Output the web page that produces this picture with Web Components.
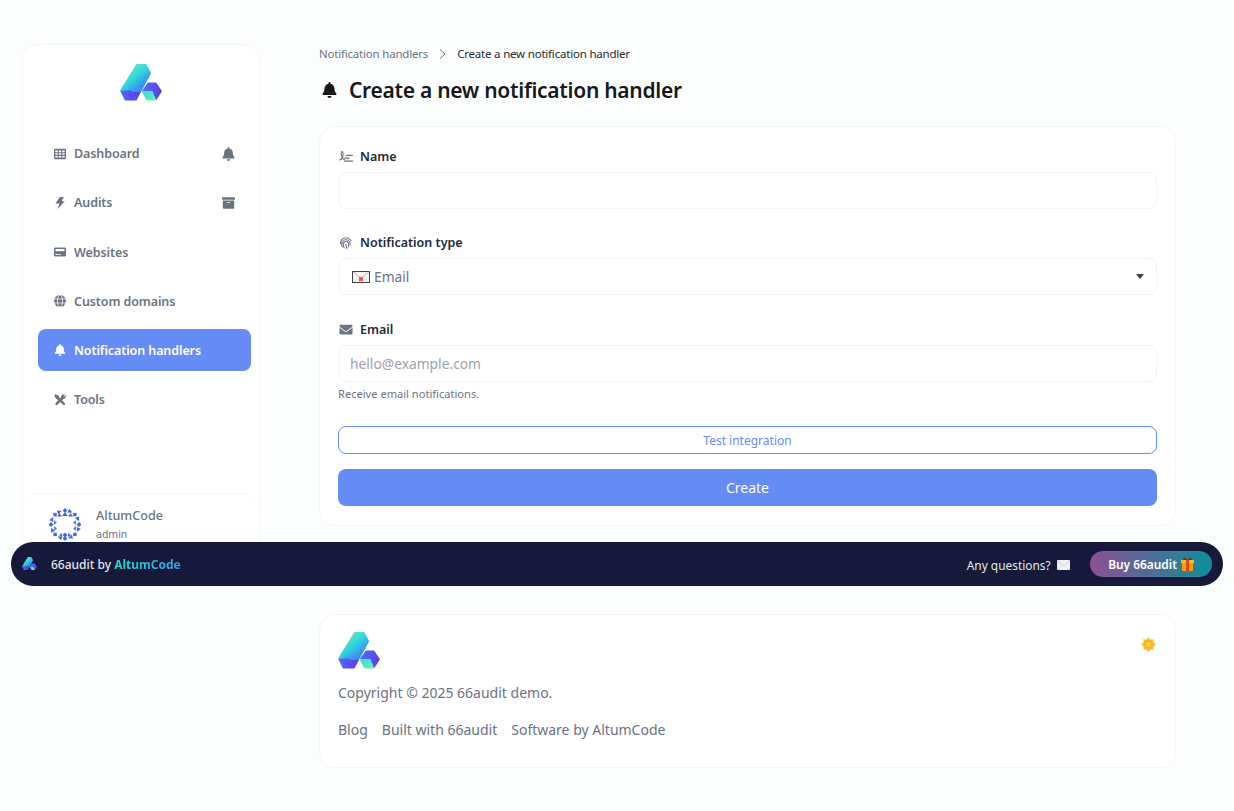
<!DOCTYPE html>
<html lang="en">
<head>
<meta charset="utf-8">
<title>Create a new notification handler</title>
<style>
    html, body {
        margin: 0;
        background: #fcfefe;
        font-family: "Noto Sans", "Open Sans", sans-serif;
    }
    body {
        height: 811px;
        overflow: hidden;
    }
</style>
</head>
<body>
<app-shell>
    <side-bar slot="side">
        <nav-item label="Dashboard" icon="grid" trail="bell"></nav-item>
        <nav-item label="Audits" icon="bolt" trail="archive"></nav-item>
        <nav-item label="Websites" icon="pager"></nav-item>
        <nav-item label="Custom domains" icon="globe"></nav-item>
        <nav-item label="Notification handlers" icon="bell" active></nav-item>
        <nav-item label="Tools" icon="tools"></nav-item>
    </side-bar>
    <bread-crumb parent="Notification handlers" current="Create a new notification handler"></bread-crumb>
    <page-title icon="bell">Create a new notification handler</page-title>
    <handler-form></handler-form>
    <page-footer></page-footer>
</app-shell>
<promo-bar></promo-bar>

<script>
const ICONS = {
    bell: '<svg viewBox="0 0 448 512"><path fill="currentColor" d="M224 512c35.32 0 63.97-28.65 63.97-64H160.03c0 35.35 28.65 64 63.97 64zm215.39-149.71c-19.32-20.76-55.47-51.99-55.47-154.29 0-77.7-54.48-139.9-127.94-155.16V32c0-17.67-14.32-32-31.98-32s-31.98 14.33-31.98 32v20.84C118.56 68.1 64.08 130.3 64.08 208c0 102.3-36.15 133.53-55.47 154.29-6 6.45-8.66 14.16-8.61 21.71.11 16.4 12.98 32 32.1 32h383.8c19.12 0 32-15.6 32.1-32 .05-7.55-2.61-15.27-8.61-21.71z"/></svg>',
    grid: '<svg viewBox="0 0 512 512"><path fill="currentColor" fill-rule="evenodd" d="M48 32h416a48 48 0 0 1 48 48v352a48 48 0 0 1-48 48H48a48 48 0 0 1-48-48V80a48 48 0 0 1 48-48zM56 104v72h104v-72zm148 0v72h104v-72zm148 0v72h104v-72zM56 220v72h104v-72zm148 0v72h104v-72zm148 0v72h104v-72zM56 336v72h104v-72zm148 0v72h104v-72zm148 0v72h104v-72z"/></svg>',
    bolt: '<svg viewBox="0 0 512 512"><path fill="currentColor" d="M250 0h170L330 180h130L160 512l70-240H60z"/></svg>',
    archive: '<svg viewBox="0 0 512 512"><path fill="currentColor" d="M32 448c0 17.7 14.3 32 32 32h384c17.7 0 32-14.3 32-32V160H32v288zm160-212c0-6.6 5.4-12 12-12h104c6.6 0 12 5.4 12 12v8c0 6.6-5.4 12-12 12H204c-6.6 0-12-5.4-12-12v-8zM480 32H32C14.3 32 0 46.3 0 64v48c0 8.8 7.2 16 16 16h480c8.8 0 16-7.2 16-16V64c0-17.7-14.3-32-32-32z"/></svg>',
    pager: '<svg viewBox="0 0 512 512"><path fill="currentColor" fill-rule="evenodd" d="M48 64h416a48 48 0 0 1 48 48v288a48 48 0 0 1-48 48H48a48 48 0 0 1-48-48V112a48 48 0 0 1 48-48zM64 128v96h384v-96zm0 208v48h96v-48zm128 0v48h96v-48z"/></svg>',
    globe: '<svg viewBox="0 0 24 24"><circle cx="12" cy="12" r="12" fill="currentColor"/><g fill="none" stroke="#fff" stroke-width="1.5"><ellipse cx="12" cy="12" rx="5" ry="12"/><path d="M0 8h24M0 16h24"/></g></svg>',
    tools: '<svg viewBox="0 0 512 512"><g fill="none" stroke="currentColor"><path stroke-width="110" stroke-linecap="round" d="M110 420 390 140"/><path stroke-width="100" stroke-linecap="round" d="M130 130 420 420"/></g><path fill="currentColor" d="M10 60 60 10 210 90 230 170 170 230 90 210z"/><path fill="currentColor" d="M300 140C290 60 370-10 470 15l-75 75 30 30 75-75c25 100-45 180-125 170z"/></svg>',
    signature: '<svg viewBox="0 0 24 20"><path fill="none" stroke="currentColor" stroke-width="1.900" stroke-linecap="round" stroke-linejoin="round" d="M1 16c3-1 6-5 6-9.500C7 3 6 1.500 5 1.500 3.500 1.500 3.500 5 4.500 9c.8 3.200 2 6 4 6 2.500 0 2.500-3.500 4-3.500s1 2.500 2.500 2.500c1 0 1.500-1 2-1.500M13 8h10M9 18h15"/></svg>',
    fingerprint: '<svg viewBox="0 0 24 24"><g fill="none" stroke="currentColor" stroke-width="2" stroke-linecap="round"><path d="M3 8a11 11 0 0 1 18 0"/><path d="M2 14c0-2 .2-3 1-4M5 20c-.8-2-1-3-1-5a8 8 0 0 1 16 0v1"/><path d="M8.500 22c-.8-2-1.500-4-1.500-7a5 5 0 0 1 10 0c0 2 0 3-.2 5"/><path d="M12 15c0 3 .5 5 1.500 8"/></g></svg>',
    envelope: '<svg viewBox="0 0 512 512"><path fill="currentColor" d="M502.3 190.8c3.9-3.1 9.7-.2 9.7 4.7V400c0 26.5-21.5 48-48 48H48c-26.5 0-48-21.5-48-48V195.6c0-5 5.7-7.8 9.7-4.7 22.4 17.4 52.1 39.5 154.1 113.6 21.1 15.4 56.7 47.8 92.2 47.6 35.7.3 72-32.8 92.3-47.6 102-74.1 131.6-96.3 154-113.7zM256 320c23.2.4 56.6-29.2 73.4-41.4 132.7-96.3 142.8-104.7 173.4-128.7 5.8-4.5 9.2-11.5 9.2-18.900v-19c0-26.500-21.500-48-48-48H48C21.500 64 0 85.500 0 112v19c0 7.400 3.400 14.300 9.200 18.900 30.600 23.900 40.700 32.400 173.400 128.700 16.800 12.200 50.200 41.800 73.400 41.400z"/></svg>',
    sun: '<svg viewBox="0 0 24 24"><g fill="#fbbf24"><circle cx="12" cy="12" r="9"/><path d="M12 0l3 4h-6zM12 24l-3-4h6zM0 12l4-3v6zM24 12l-4 3V9zM3.500 3.500l5 1-4 4zM20.500 20.500l-5-1 4-4zM20.500 3.500l-1 5-4-4zM3.500 20.500l1-5 4 4z"/></g><circle cx="12" cy="12" r="5.500" fill="#fcd34d" stroke="#f59e0b" stroke-width="1.500"/></svg>'
};

function defineElement(name, html) {
    customElements.define(name, class extends HTMLElement {
        constructor() {
            super();
            this.attachShadow({ mode: 'open' });
        }
        connectedCallback() {
            const attrs = {};
            for (const a of this.attributes) attrs[a.name] = a.value;
            this.shadowRoot.innerHTML = typeof html === 'function' ? html(attrs) : html;
        }
    });
}

let logoCount = 0;
class BrandLogo extends HTMLElement {
    constructor() {
        super();
        this.attachShadow({ mode: 'open' });
    }
    connectedCallback() {
        const w = this.getAttribute('width') || 42;
        const n = logoCount++;
        this.shadowRoot.innerHTML = `
        <style>
            :host { display: block; line-height: 0; }
            svg { display: block; }
        </style>
        <svg width="${w}" viewBox="0 0 42.700 38" style="aspect-ratio: 42.7 / 38">
            <defs>
                <linearGradient id="a${n}" x1="0.250" y1="0.050" x2="0.850" y2="0.700">
                    <stop offset="0" stop-color="#66efbf"/>
                    <stop offset="0.550" stop-color="#2fd5dc"/>
                    <stop offset="1" stop-color="#3a8cf6"/>
                </linearGradient>
                <linearGradient id="b${n}" x1="0" y1="0" x2="1" y2="0">
                    <stop offset="0" stop-color="#4a74f2"/>
                    <stop offset="1" stop-color="#5c3ce8"/>
                </linearGradient>
                <linearGradient id="c${n}" x1="0" y1="0" x2="1" y2="1">
                    <stop offset="0" stop-color="#2fd8d0"/>
                    <stop offset="1" stop-color="#6cf0bc"/>
                </linearGradient>
            </defs>
            <path fill="url(#a${n})" d="M0 27 16.700 0h10l5 9.300-10 18.400H11z"/>
            <path fill="url(#b${n})" d="M0 27h11l5.700 10H5z"/>
            <path fill="#5a45e8" d="M11 27.700h10.700L16.700 37z"/>
            <path fill="url(#b${n})" d="M22 27.700 28.300 18.700h8.400l6 9-6 9.300-4-9.300z"/>
            <path fill="url(#c${n})" d="M22 27.700h10.700l4 9.300H27z"/>
        </svg>`;
    }
}
customElements.define('brand-logo', BrandLogo);

// avatar ring of little blue triangles and diamonds
class UserAvatar extends HTMLElement {
    constructor() {
        super();
        this.attachShadow({ mode: 'open' });
    }
    connectedCallback() {
        let marks = '';
        for (let i = 0; i < 16; i++) {
            const deg = i * 22.5;
            const shape = i % 2 ? 'M-2.200 -2.200 2.200 0 -2.200 2.200z' : 'M0 -2.400 2.400 0 0 2.400 -2.400 0z';
            marks += `<path d="${shape}" transform="translate(16 16.500) rotate(${deg}) translate(0 -14)"/>`;
        }
        this.shadowRoot.innerHTML = `
        <style>
            :host { display: block; flex: none; }
            svg { display: block; }
        </style>
        <svg width="32" height="33" viewBox="0 0 32 33">
            <g fill="#4268dc">${marks}</g>
            <path fill="#4268dc" d="M16 4l3 4h-6zM10.500 5l2.500 3.500H8zM21.500 5l2.500 3.500h-5z"/>
            <path fill="#5c80e8" d="M5 12l3 2.500-3 2.500zM27 12l-3 2.500 3 2.500zM5 18l3 2.500-3 2.500zM27 18l-3 2.500 3 2.500z"/>
            <path fill="#4268dc" d="M10 27l3-2v4zM22 27l-3-2v4zM16 24.500l2.500 2.500-2.500 2.500-2.500-2.500z"/>
        </svg>`;
    }
}
customElements.define('user-avatar', UserAvatar);

defineElement('app-shell', `
    <style>
        :host {
            display: flex;
            gap: 59px;
            padding: 44px 0 0 22px;
            box-sizing: border-box;
        }
        main {
            width: 857px;
            display: flex;
            flex-direction: column;
        }
    </style>
    <slot name="side"></slot>
    <main><slot></slot></main>
`);

defineElement('side-bar', `
    <style>
        :host {
            display: flex;
            flex-direction: column;
            box-sizing: border-box;
            flex: none;
            width: 238px;
            height: 516px;
            background: #fff;
            border: 1px solid #f3f6f7;
            border-radius: 16px;
        }
        .logo {
            display: flex;
            justify-content: center;
            padding: 19px 0 31.300px;
        }
        nav {
            flex: 1;
            display: flex;
            flex-direction: column;
            gap: 7.2px;
            padding: 0 8px 0 15px;
        }
        .user {
            display: flex;
            align-items: center;
            gap: 15px;
            height: 66px;
            padding: 0 0 4px 26px;
            box-sizing: border-box;
            border-top: 1px solid #f3f6f7;
            border-radius: 16px 16px 0 0;
        }
        .name { font-size: 12.600px; font-weight: 500; color: #6b7280; line-height: 18px; }
        .role { font-size: 10.500px; color: #6b7280; line-height: 18px; }
    </style>
    <div class="logo"><brand-logo width="42"></brand-logo></div>
    <nav><slot></slot></nav>
    <div class="user">
        <user-avatar></user-avatar>
        <div>
            <div class="name">AltumCode</div>
            <div class="role">admin</div>
        </div>
    </div>
`);

defineElement('nav-item', (a) => `
    <style>
        :host {
            display: flex;
            align-items: center;
            height: 42px;
            padding: 0 16px 0 15px;
            border-radius: 8px;
            font-size: 12.500px;
            letter-spacing: -0.100px;
            font-weight: 600;
            color: #6b7280;
        }
        :host([active]) {
            background: #648cf4;
            color: #fff;
        }
        .icon { width: 21px; flex: none; }
        .icon svg { display: block; width: 12px; height: 12px; margin-left: 0.500px; }
        .label { flex: 1; }
        .trail svg { display: block; width: 13px; height: 14px; }
    </style>
    <span class="icon">${ICONS[a.icon]}</span>
    <span class="label">${a.label}</span>
    ${a.trail ? `<span class="trail">${ICONS[a.trail]}</span>` : ''}
`);

defineElement('bread-crumb', (a) => `
    <style>
        :host {
            display: flex;
            align-items: center;
            height: 19px;
            font-size: 11.500px;
            letter-spacing: -0.200px;
            color: #6b7280;
        }
        svg { width: 7px; height: 10px; margin: 0 11px; }
        .now { color: #27272a; }
    </style>
    <span>${a.parent}</span>
    <svg viewBox="0 0 7 10"><path d="M1 0.500 6 5 1 9.500" fill="none" stroke="#6b7280" stroke-width="1"/></svg>
    <span class="now">${a.current}</span>
`);

defineElement('page-title', (a) => `
    <style>
        :host {
            display: flex;
            align-items: center;
            gap: 12.500px;
            height: 34px;
            margin: 10px 0 19px;
            padding-left: 2.500px;
            font-size: 21px;
            letter-spacing: -0.280px;
            font-weight: 600;
            color: #18181b;
        }
        svg { display: block; width: 15px; height: 16px; }
    </style>
    ${ICONS[a.icon]}
    <slot></slot>
`);

defineElement('form-field', (a) => `
    <style>
        :host {
            display: block;
            margin-bottom: 24px;
        }
        :host(.tight) { margin-bottom: 23px; }
        .label {
            display: flex;
            align-items: center;
            height: 20px;
            margin-bottom: 6px;
            font-size: 12.500px;
            font-weight: 600;
            color: #1f2937;
        }
        .icon { width: 22px; flex: none; color: #6b7280; }
        .icon svg { display: block; width: 14px; height: 13px; margin-left: 0.500px; }
        .help {
            margin-top: 4px;
            height: 16px;
            line-height: 16px;
            font-size: 11.100px;
            color: #6b7280;
        }
    </style>
    <div class="label"><span class="icon">${ICONS[a.icon]}</span>${a.label}</div>
    <slot></slot>
    ${a.help ? `<div class="help">${a.help}</div>` : ''}
`);

defineElement('text-input', (a) => `
    <style>
        :host { display: block; }
        input {
            display: block;
            width: 100%;
            height: 37px;
            box-sizing: border-box;
            padding: 0 11px;
            background: #fff;
            border: 1px solid #f2f4f5;
            border-radius: 8px;
            outline: 0;
            font: inherit;
            font-size: 13.800px;
            color: #374151;
        }
        input::placeholder { color: #a1a1aa; opacity: 1; }
    </style>
    <input type="text" placeholder="${a.placeholder || ''}">
`);

defineElement('type-select', (a) => `
    <style>
        :host {
            display: flex;
            align-items: center;
            gap: 4px;
            height: 37px;
            box-sizing: border-box;
            padding: 0 12.500px 0 13px;
            background: #fff;
            border: 1px solid #f2f4f5;
            border-radius: 8px;
            font-size: 13.800px;
            color: #6b7280;
        }
        svg { display: block; flex: none; }
        span { flex: 1; }
    </style>
    <svg width="18" height="12" viewBox="0 0 18 12">
        <rect x="0.500" y="0.500" width="17" height="11" fill="#f4f1ee" stroke="#3f3f46"/>
        <path d="M1 1l8 6 8-6" fill="none" stroke="#c9c3bf" stroke-width="1"/>
        <rect x="7" y="6" width="4" height="4" fill="#ef5a4c"/>
    </svg>
    <span>${a.value}</span>
    <svg width="8" height="5" viewBox="0 0 8 5"><path d="M0 0h8L4 5z" fill="#374151"/></svg>
`);

defineElement('action-button', (a) => `
    <style>
        :host {
            display: flex;
            align-items: center;
            justify-content: center;
            box-sizing: border-box;
            height: 36.500px;
            border-radius: 8px;
            background: #648cf4;
            color: #fff;
            font-size: 14px;
        }
        :host([outline]) {
            height: 28px;
            background: #fff;
            border: 1px solid #648cf4;
            color: #648cf4;
            font-size: 12px;
        }
    </style>
    <slot></slot>
`);

defineElement('handler-form', `
    <style>
        :host {
            display: block;
            box-sizing: border-box;
            background: #fff;
            border: 1px solid #f3f6f7;
            border-radius: 16px;
            padding: 19px 18px 19px;
        }
        .buttons {
            display: flex;
            flex-direction: column;
            gap: 15px;
        }
    </style>
    <form-field class="tight" label="Name" icon="signature"><text-input></text-input></form-field>
    <form-field label="Notification type" icon="fingerprint"><type-select value="Email"></type-select></form-field>
    <form-field label="Email" icon="envelope" help="Receive email notifications."><text-input placeholder="hello@example.com"></text-input></form-field>
    <div class="buttons">
        <action-button outline>Test integration</action-button>
        <action-button>Create</action-button>
    </div>
`);

defineElement('page-footer', `
    <style>
        :host {
            display: block;
            box-sizing: border-box;
            height: 154px;
            margin-top: 88px;
            padding: 17.500px 18px 0;
            background: #fff;
            border: 1px solid #f3f6f7;
            border-radius: 16px;
            color: #6b7280;
            font-size: 14px;
        }
        .top {
            display: flex;
            justify-content: space-between;
            align-items: flex-start;
        }
        .sun { display: block; width: 15px; height: 15px; margin-top: 5px; margin-right: 1px; }
        .sun svg { display: block; }
        .copy { margin-top: 13.500px; height: 20px; line-height: 20px; }
        .links {
            display: flex;
            gap: 14px;
            margin-top: 17px;
            height: 20px;
            line-height: 20px;
        }
    </style>
    <div class="top">
        <brand-logo width="42"></brand-logo>
        <span class="sun">${ICONS.sun}</span>
    </div>
    <div class="copy">Copyright © 2025 66audit demo.</div>
    <div class="links"><span>Blog</span><span>Built with 66audit</span><span>Software by AltumCode</span></div>
`);

defineElement('promo-bar', `
    <style>
        :host {
            /* floats over the page */
            position: fixed;
            left: 11px;
            top: 542px;
            width: 1212px;
            height: 44px;
            box-sizing: border-box;
            display: flex;
            align-items: center;
            padding: 0 11px;
            border-radius: 22px;
            background: #16193a;
            color: #e5e7eb;
            font-size: 12px;
            font-weight: 500;
        }
        brand-logo { margin-right: 14px; }
        .by { flex: 1; padding-top: 1px; }
        b { font-weight: 700; background: linear-gradient(90deg, #2fd6cf, #3aa0e8); -webkit-background-clip: text; background-clip: text; color: transparent; }
        .ask { display: flex; align-items: center; gap: 6px; margin-right: 20px; padding-top: 1px; font-size: 11.900px; font-weight: 400; }
        .buy {
            display: flex;
            align-items: center;
            gap: 4px;
            height: 26px;
            padding: 0 18px 0 18.500px;
            border-radius: 13px;
            background: linear-gradient(90deg, #8e4f94, #0e8f98);
            color: #fff;
            font-size: 11.900px;
            font-weight: 600;
        }
        svg { display: block; }
    </style>
    <brand-logo width="15"></brand-logo>
    <span class="by">66audit by <b>AltumCode</b></span>
    <span class="ask">Any questions?
        <svg width="13" height="10" viewBox="0 0 13 10"><rect width="13" height="10" rx="1" fill="#f1f1f1"/><path d="M0.500 1 6.500 6 12.500 1" fill="none" stroke="#bdbdbd" stroke-width="0.800"/></svg>
    </span>
    <span class="buy">Buy 66audit
        <svg width="13" height="14" viewBox="0 0 13 14"><rect x="1" y="4" width="11" height="10" fill="#f59e0b"/><rect x="0" y="3" width="13" height="3" fill="#fbbf24"/><rect x="5" y="3" width="3" height="11" fill="#dc4a1f"/><path d="M6.500 3C4 0 1.500 0 2.500 3zM6.500 3c2.500-3 5-3 4 0z" fill="#7c2d12"/></svg>
    </span>
`);
</script>
</body>
</html>
